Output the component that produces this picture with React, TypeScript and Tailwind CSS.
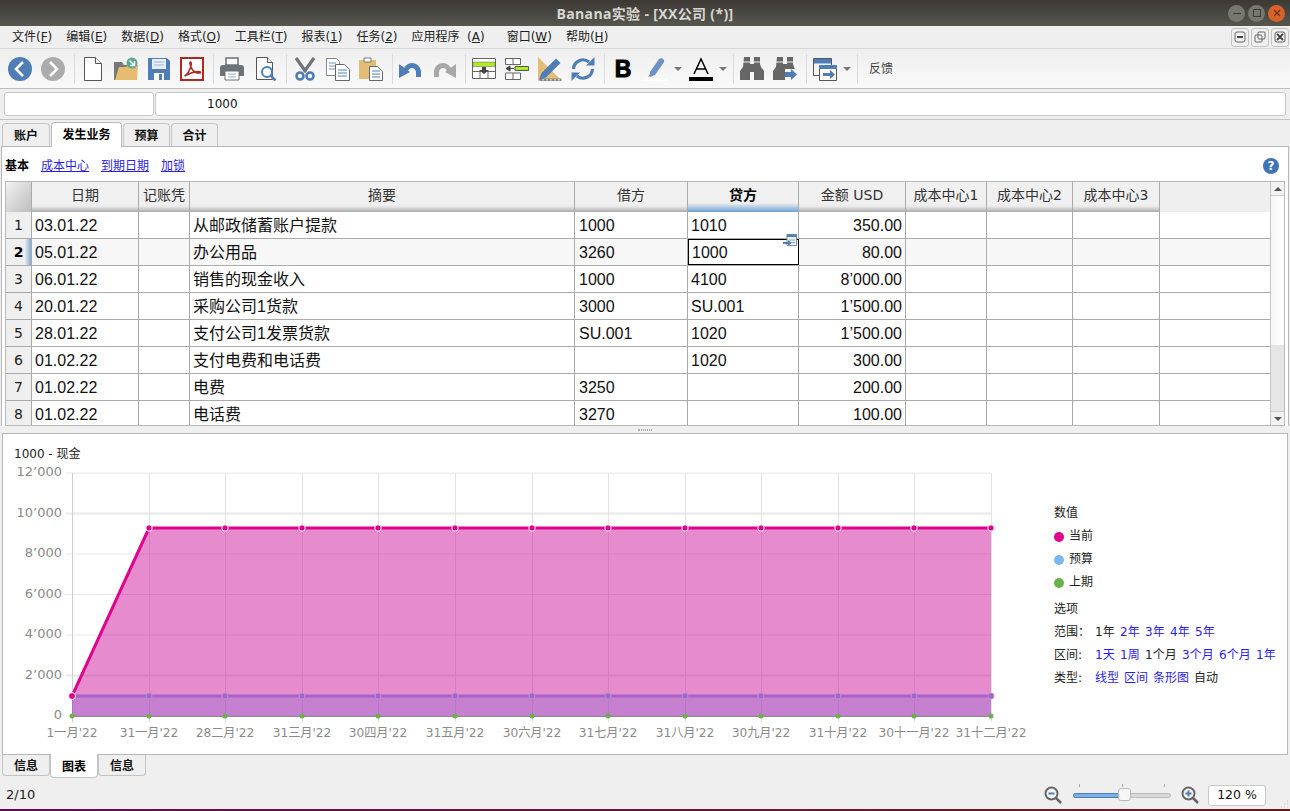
const cjk = "font-['DejaVu_Sans','Noto_Sans_CJK_SC',sans-serif]";

const menus = [
  ["文件(", "F", ")"],
  ["编辑(", "E", ")"],
  ["数据(", "D", ")"],
  ["格式(", "O", ")"],
  ["工具栏(", "T", ")"],
  ["报表(", "1", ")"],
  ["任务(", "2", ")"],
  ["应用程序  (", "A", ")"],
  ["窗口(", "W", ")"],
  ["帮助(", "H", ")"],
];

const columns = [
  { name: "日期", w: "w-[107px]" },
  { name: "记账凭", w: "w-[51px]" },
  { name: "摘要", w: "w-[385px]" },
  { name: "借方", w: "w-[113px]" },
  { name: "贷方", w: "w-[111px]" },
  { name: "金额 USD", w: "w-[107px]" },
  { name: "成本中心1", w: "w-[81px]" },
  { name: "成本中心2", w: "w-[86px]" },
  { name: "成本中心3", w: "w-[87px]" },
];

const rows = [
  ["03.01.22", "", "从邮政储蓄账户提款", "1000", "1010", "350.00"],
  ["05.01.22", "", "办公用品", "3260", "1000", "80.00"],
  ["06.01.22", "", "销售的现金收入", "1000", "4100", "8’000.00"],
  ["20.01.22", "", "采购公司1货款", "3000", "SU.001", "1’500.00"],
  ["28.01.22", "", "支付公司1发票货款", "SU.001", "1020", "1’500.00"],
  ["01.02.22", "", "支付电费和电话费", "", "1020", "300.00"],
  ["01.02.22", "", "电费", "3250", "", "200.00"],
  ["01.02.22", "", "电话费", "3270", "", "100.00"],
];

const xs = [72, 149, 225, 302, 378, 455, 532, 608, 685, 761, 838, 914, 991];
const xLabels = ["1一月'22", "31一月'22", "28二月'22", "31三月'22", "30四月'22", "31五月'22", "30六月'22", "31七月'22", "31八月'22", "30九月'22", "31十月'22", "30十一月'22", "31十二月'22"];
const yTicks = [
  ["12’000", 473],
  ["10’000", 513.5],
  ["8’000", 554],
  ["6’000", 594.5],
  ["4’000", 635],
  ["2’000", 675.5],
  ["0", 716],
] as const;

function Sep() {
  return <div className="mr-[6px] h-[30px] w-px bg-[#dcdcdc]" />;
}

function Tool({ children, className = "mr-[9px]" }: { children: React.ReactNode; className?: string }) {
  return (
    <svg viewBox="0 0 24 24" className={`h-6 w-6 shrink-0 ${className}`}>
      {children}
    </svg>
  );
}

function Caret() {
  return (
    <svg viewBox="0 0 12 12" className="mr-[4px] h-3 w-3 shrink-0">
      <path d="M2 4h8l-4 4z" fill="#777" />
    </svg>
  );
}

function Toolbar() {
  const blue = "#4f7db8";
  const grey = "#666";
  return (
    <div className="flex h-[40px] shrink-0 items-center border-b border-[#bdbdbd] bg-gradient-to-b from-[#efefef] to-[#f9f9f9] pl-2">
      <Tool>
        <circle cx="12" cy="12" r="12" fill={blue} />
        <path d="M15 5l-7 7 7 7" fill="none" stroke="#fff" strokeWidth="2.6" />
      </Tool>
      <Tool>
        <circle cx="12" cy="12" r="12" fill="#ababab" />
        <path d="M9 5l7 7-7 7" fill="none" stroke="#fff" strokeWidth="2.6" />
      </Tool>
      <Sep />
      <Tool>
        <path d="M3.500 .5h11l6 6v17h-17z" fill="#fff" stroke="#555" />
        <path d="M14.500 .5v6h6" fill="#eee" stroke="#555" />
      </Tool>
      <Tool>
        <path d="M0 23V5h8l2 3h5v15z" fill="#777" />
        <path d="M1 23l4-13h7l2-2h10l-1 15z" fill="#e6bc70" />
        <circle cx="18" cy="6" r="5.500" fill="#5aa88a" />
        <path d="M15.500 3.500l4.500 4.500M20.500 4v4.500H16" fill="none" stroke="#fff" strokeWidth="1.500" />
      </Tool>
      <Tool>
        <path d="M1 1h19l3 3v19H1z" fill={blue} />
        <path d="M5 2h14v10H5z" fill="#e8eef6" />
        <path d="M7 5h10M7 8h10" stroke="#9db5d6" strokeWidth="1.200" />
        <path d="M7 16h10v7H7z" fill="#fff" />
        <path d="M12 17h3v6h-3z" fill={blue} />
      </Tool>
      <Tool>
        <path d="M1 1h22v22H1z" fill="#fff" stroke="#ad2a24" strokeWidth="2" />
        <path
          d="M4.500 19c3-1.500 5-5 6.500-10 .5-2 .5-4-.5-4-1.200 0-.5 4 1.500 7 2 3 5 4.500 8 4 1.500-.5 0-2-3-1.500-4 .5-8 2-12.500 4.500z"
          fill="none"
          stroke="#ad2a24"
          strokeWidth="1.500"
        />
      </Tool>
      <Sep />
      <Tool>
        <path d="M6 1h12v7H6z" fill="#fff" stroke="#6b7278" strokeWidth="1.500" />
        <path d="M0 11q0-3 3-3h18q3 0 3 3v8H0z" fill="#6b7278" />
        <path d="M5 14h14v9H5z" fill="#fff" stroke="#6b7278" />
        <path d="M8 17h8M8 20h8" stroke="#8fb0d8" />
      </Tool>
      <Tool>
        <path d="M3.500 .5h11l5 5v17h-16z" fill="#fff" stroke="#555" />
        <path d="M14.500 .5v5h5" fill="#eee" stroke="#555" />
        <circle cx="14" cy="15" r="5" fill="#fff" stroke={blue} strokeWidth="2" />
        <path d="M17.500 18.500l5 5" stroke={blue} strokeWidth="2.500" />
      </Tool>
      <Sep />
      <Tool>
        <path d="M3 1l10 14M21 1L11 15" stroke="#6f7478" strokeWidth="3.200" />
        <circle cx="7" cy="19" r="3.500" fill="none" stroke={blue} strokeWidth="2.600" />
        <circle cx="17" cy="19" r="3.500" fill="none" stroke={blue} strokeWidth="2.600" />
      </Tool>
      <Tool>
        <path d="M.5 1.500h10l3 3v14H.5z" fill="#fff" stroke="#888" />
        <path d="M3 6h7M3 9h7M3 12h7" stroke="#6f93c4" />
        <path d="M9.500 7.500h9l5 5v11h-14z" fill="#fff" stroke="#666" />
        <path d="M12 13h9M12 16h9M12 19h9" stroke={blue} />
      </Tool>
      <Tool>
        <path d="M0 3h17v19H0z" fill="#e3bd75" />
        <path d="M5 1h7v4H5z" fill="#fff" stroke="#777" />
        <path d="M10.500 9.500h8l5 5v9h-13z" fill="#fff" stroke="#666" />
        <path d="M13 14h8M13 17h8M13 20h8" stroke={blue} />
      </Tool>
      <Sep />
      <Tool>
        <path d="M4 14c1-5 5-8 9-8 5 0 9 4 9 9v5h-5v-5c0-2-2-4-4-4-2 0-3 1-4 3z" fill={blue} />
        <path d="M0 7l11 8-11 6z" fill={blue} />
      </Tool>
      <Tool>
        <path d="M20 14c-1-5-5-8-9-8-5 0-9 4-9 9v5h5v-5c0-2 2-4 4-4 2 0 3 1 4 3z" fill="#a8a8a8" />
        <path d="M24 7l-11 8 11 6z" fill="#a8a8a8" />
      </Tool>
      <Sep />
      <Tool>
        <path d="M.5 1.500h23v20H.5zM.5 14.500h23M8 14.500v7M16 14.500v7" fill="#fff" stroke="#666" />
        <path d="M1 5h22v4.500H1z" fill="#aeea2a" stroke="#666" strokeWidth=".5" />
        <path d="M10 10h4v3h3l-5 4-5-4h3z" fill="#444" />
      </Tool>
      <Tool>
        <path d="M.5 1.500h15v6H.5zM8 1.500v6M.5 16h15v6.500H.5zM8 16v6.500" fill="#fff" stroke="#666" />
        <path d="M10 9.500h13.500v4H10z" fill="#aeea2a" stroke="#555" />
        <path d="M9 11.500H5V9L1 11.500 5 14v-2.500z" fill="#444" stroke="#444" />
      </Tool>
      <Tool>
        <path d="M0 0v24h24z" fill="#e3bd75" />
        <path d="M5 13v6h6z" fill="#f6f6f6" />
        <path d="M2 21.500h21.500V24H2z" fill="#8a8a8a" />
        <path d="M5 22v1.500M9 22v1.500M13 22v1.500M17 22v1.500M21 22v1.500" stroke="#fff" />
        <path d="M1 23l2.500-7L18 1.500 22.500 6 8 20.500z" fill={blue} />
      </Tool>
      <Tool>
        <path d="M2.500 12a9.500 9.500 0 0 1 15.500-7" fill="none" stroke={blue} strokeWidth="3.200" />
        <path d="M21.500 12a9.500 9.500 0 0 1-15.500 7" fill="none" stroke={blue} strokeWidth="3.200" />
        <path d="M15 8.500h8.500V0zM9 15.500H.5V24z" fill={blue} />
      </Tool>
      <Sep />
      <Tool>
        <text x="12" y="20" textAnchor="middle" fontFamily="Liberation Sans, sans-serif" fontWeight="900" fontSize="23" stroke="#000" strokeWidth="1">
          B
        </text>
      </Tool>
      <Tool className="mr-[4px]">
        <path d="M6 15L15 2c2-2 6 0 5 3L11 18l-5 2z" fill="#6c92c6" />
        <path d="M6 17l-2 3 3-1z" fill="#6c92c6" />
        <path d="M0 21h24v3H0z" fill="#fff" />
      </Tool>
      <Caret />
      <div className="mr-[1px]" />
      <Tool className="mr-[4px]">
        <path d="M5 17L12 2l7 15M7.500 12h9" fill="none" stroke="#000" strokeWidth="1.500" />
        <path d="M0 20h24v4H0z" fill="#000" />
      </Tool>
      <Caret />
      <Sep />
      <Tool>
        <path d="M4 0h6v7h4V0h6v7l1 3 3 4v9h-10v-8h-4v8H0v-9l3-4z" fill={grey} />
        <path d="M3 5h7M14 5h7" stroke="#f4f4f4" />
      </Tool>
      <Tool>
        <path d="M4 0h6v7h4V0h6v7l1 3 1 2H12v11h-2v-8H0v-1l3-4z" fill={grey} />
        <path d="M0 15h10v8H0z" fill={grey} />
        <path d="M3 5h7M14 5h7" stroke="#f4f4f4" />
        <path d="M12 15h6v-3l6 5.500-6 5.500v-3h-6z" fill={blue} />
      </Tool>
      <Sep />
      <Tool className="mr-[4px]">
        <path d="M.5 1.500h18v5H.5z" fill={blue} />
        <path d="M.5 1.500h18v17H.5z" fill="#fff" fillOpacity="0" stroke="#555" />
        <path d="M6 8h18v4H6z" fill={blue} />
        <path d="M6.500 8.500h17v15h-17z" fill="#fff" fillOpacity=".9" stroke="#555" />
        <path d="M6 8h18v4H6z" fill={blue} />
        <path d="M10 16h7v-3l5 4.500-5 4.500v-3h-7z" fill={blue} />
      </Tool>
      <Caret />
      <Sep />
      <span className="ml-[5px] text-[12px] text-[#444]">反馈</span>
    </div>
  );
}

function MdiButton({ children }: { children: React.ReactNode }) {
  return (
    <div className="flex h-[19px] w-[18px] items-center justify-center rounded-[3px] border border-[#c4c4c4] bg-[#f0f0f0]">
      <svg viewBox="0 0 12 12" className="h-3 w-3">
        {children}
      </svg>
    </div>
  );
}

function Table() {
  return (
    <div className="mx-[3px] flex h-[245px] border border-[#b8b8b8] bg-white">
      <div className="min-w-0 flex-1 overflow-hidden">
        <div className="flex h-[30px] bg-[#efefef]">
          <div className="h-[30px] w-[26px] border-r border-[#aaa] bg-gradient-to-br from-[#f2f2f2] to-[#bdbdbd]" />
          {columns.map((col) => (
            <div
              key={col.name}
              className={`flex h-[30px] items-center justify-center border-r border-[#aaa] pb-[3px] text-[14px] text-[#333] ${col.w} ${
                col.name === "贷方"
                  ? "bg-[linear-gradient(#f0f0f0_70%,#6ea0d2)] font-bold text-black"
                  : "bg-[linear-gradient(#f0f0f0_75%,#e8e8e8_82%,#aaa)]"
              }`}
            >
              {col.name}
            </div>
          ))}
        </div>
        {rows.map((row, i) => (
          <div key={i} className={`flex h-[27px] border-b border-[#aaa] ${i === 1 ? "bg-[#f7f7f7]" : ""}`}>
            <div
              className={`flex w-[26px] items-center justify-center border-r border-[#aaa] text-[14px] ${
                i === 1 ? "bg-[linear-gradient(90deg,#efefef_75%,#7eaad8)] font-bold text-black" : "bg-[#efefef] text-[#222]"
              }`}
            >
              {i + 1}
            </div>
            {columns.map((col, c) => {
              const text = row[c] ?? "";
              const selected = i === 1 && c === 4;
              return (
                <div
                  key={col.name}
                  className={`relative flex items-center overflow-visible whitespace-nowrap pt-px font-['Liberation_Sans','Noto_Sans_CJK_SC',sans-serif] text-[16px] text-[#111] ${col.w} ${
                    c === 5 ? "justify-end pr-[3px]" : c === 3 ? "pl-[4px]" : "pl-[3px]"
                  } ${selected ? "border border-black bg-white" : "border-r border-[#aaa]"}`}
                >
                  {text}
                  {selected && (
                    <svg viewBox="0 0 14 14" className="absolute -top-[6px] right-[1px] h-[14px] w-[14px]">
                      <path d="M4 .5h9.500v11H4z" fill="#eef3f9" stroke="#7a8fa8" />
                      <path d="M4 .5h9.500v2.500H4z" fill="#4f7db8" />
                      <path d="M6 6h6M8 8.500h4" stroke="#8aa6c8" />
                      <path d="M0 8h5V6l3.500 3L5 12v-2H0z" fill="#4f7db8" />
                    </svg>
                  )}
                </div>
              );
            })}
          </div>
        ))}
      </div>
      <div className="flex w-[14px] shrink-0 flex-col border-l border-[#c4c4c4] bg-white">
        <div className="flex h-[14px] items-center justify-center border-b border-[#ccc] bg-[#f2f2f2]">
          <div className="h-0 w-0 border-x-[4px] border-b-[4px] border-x-transparent border-b-[#555]" />
        </div>
        <div className="h-[149px] bg-gradient-to-r from-[#f6f6f6] to-white" />
        <div className="flex-1 bg-[#e6e6e6]" />
        <div className="flex h-[14px] items-center justify-center border-t border-[#ccc] bg-[#f2f2f2]">
          <div className="h-0 w-0 border-x-[4px] border-t-[4px] border-x-transparent border-t-[#555]" />
        </div>
      </div>
    </div>
  );
}

function Chart() {
  return (
    <svg viewBox="3 462 1037 292" className="h-[292px] w-[1037px] shrink-0">
      {yTicks.map(([, y]) => (
        <path key={y} d={`M66 ${y}H991`} stroke="#e8e8e8" strokeWidth={y === 513.5 || y === 675.5 ? 2 : 1} />
      ))}
      {xs.map((x, i) => (
        <path key={x} d={`M${x + 0.5} 473V722`} stroke={i === 0 ? "#cfcfcf" : "#e2e2e2"} />
      ))}
      <path d="M72 696L149 528H991V716H72z" fill="#c90d98" fillOpacity=".48" />
      <path d="M72 696H991V716H72z" fill="#8a6cd0" fillOpacity=".35" />
      <path d="M72 716.500H991" stroke="#8c8c8c" />
      <path d="M72 696H991" stroke="#a565c8" strokeWidth="3" />
      <path d="M72 696L149 528H991" fill="none" stroke="#e0008c" strokeWidth="3" />
      {xs.slice(1).map((x) => (
        <circle key={x} cx={x} cy={696} r="3" fill="#a565c8" stroke="#c08ad8" />
      ))}
      {xs.map((x) => (
        <circle key={x} cx={x} cy={716} r="2.500" fill="#6ab04c" />
      ))}
      {xs.slice(1).map((x) => (
        <circle key={x} cx={x} cy={528} r="3.200" fill="#e0008c" stroke="#fff" />
      ))}
      <circle cx={72} cy={696} r="3.500" fill="#e0008c" stroke="#fff" />
      {yTicks.map(([label, y]) => (
        <text
          key={label}
          x={62}
          y={y + 3}
          textAnchor="end"
          fontSize="13"
          fill="#8a8a8a"
          fontFamily="DejaVu Sans, Noto Sans CJK SC, sans-serif"
        >
          {label}
        </text>
      ))}
      {xs.map((x, i) => (
        <text
          key={x}
          x={x}
          y={737}
          textAnchor="middle"
          fontSize="12.200"
          fill="#8a8a8a"
          fontFamily="DejaVu Sans, Noto Sans CJK SC, sans-serif"
        >
          {xLabels[i]}
        </text>
      ))}
    </svg>
  );
}

function Legend() {
  const link = "text-[#2a1cf0]";
  return (
    <div className="flex flex-col pl-[14px] pt-[68px] text-[12px] leading-[23px] text-[#222]">
      <div>数值</div>
      {[
        ["当前", "bg-[#e0008c]"],
        ["预算", "bg-[#7ab8f5]"],
        ["上期", "bg-[#6ab04c]"],
      ].map(([label, color]) => (
        <div key={label} className="flex items-center gap-[5px]">
          <span className={`h-[10px] w-[10px] rounded-full ${color}`} />
          {label}
        </div>
      ))}
      <div className="mt-[4px]">选项</div>
      <div className="flex">
        <span className="w-[41px]">范围：</span>
        <span className="flex gap-[1px]">
          <span className="w-[24px]">1年</span>
          <span className={`w-[24px] ${link}`}>2年</span>
          <span className={`w-[24px] ${link}`}>3年</span>
          <span className={`w-[24px] ${link}`}>4年</span>
          <span className={`w-[24px] ${link}`}>5年</span>
        </span>
      </div>
      <div className="flex">
        <span className="w-[41px]">区间:</span>
        <span className="flex gap-[1px]">
          <span className={`w-[24px] ${link}`}>1天</span>
          <span className={`w-[24px] ${link}`}>1周</span>
          <span className="w-[36px]">1个月</span>
          <span className={`w-[36px] ${link}`}>3个月</span>
          <span className={`w-[36px] ${link}`}>6个月</span>
          <span className={`w-[24px] ${link}`}>1年</span>
        </span>
      </div>
      <div className="flex">
        <span className="w-[41px]">类型:</span>
        <span className="flex gap-[5px]">
          <span className={link}>线型</span>
          <span className={link}>区间</span>
          <span className={link}>条形图</span>
          <span>自动</span>
        </span>
      </div>
    </div>
  );
}

export default function App() {
  return (
    <div className={`flex h-[811px] w-[1290px] flex-col overflow-hidden bg-[#efefef] text-[12px] text-[#222] ${cjk}`}>
      <div className="flex h-[26px] shrink-0 items-center bg-gradient-to-b from-[#3c3935] to-[#57564f]">
        <div className="flex-1 pl-[62px] text-center font-['Open_Sans','Noto_Sans_CJK_SC',sans-serif] text-[14px] font-bold tracking-[.35px] text-[#d8d6d0]">
          Banana实验 - [XX公司 (*)]
        </div>
        <div className="flex items-center gap-[3px] pr-[5px]">
          <div className="flex h-[17px] w-[17px] items-center justify-center rounded-full bg-[#77766f]">
            <div className="h-px w-[8px] bg-[#3c3b36]" />
          </div>
          <div className="flex h-[17px] w-[17px] items-center justify-center rounded-full bg-[#77766f]">
            <div className="h-[8px] w-[8px] border border-[#3c3b36]" />
          </div>
          <div className="flex h-[17px] w-[17px] items-center justify-center rounded-full bg-[#d9622b]">
            <svg viewBox="0 0 8 8" className="h-2 w-2">
              <path d="M1 1l6 6M7 1L1 7" stroke="#6b3318" strokeWidth="1.200" />
            </svg>
          </div>
        </div>
      </div>

      <div className="flex h-[23px] shrink-0 items-center justify-between border-b border-[#d8d8d8] pl-[12px] pr-[1px]">
        <div className="flex gap-[14px] whitespace-pre">
          {menus.map(([a, b, c]) => (
            <span key={a} className={a.startsWith("窗口") ? "ml-[8px]" : ""}>
              {a}
              <span className="underline">{b}</span>
              {c}
            </span>
          ))}
        </div>
        <div className="flex gap-[2px]">
          <MdiButton>
            <rect x="1" y="1" width="10" height="10" rx="2" fill="none" stroke="#666" />
            <path d="M3 6h6" stroke="#444" strokeWidth="2" />
          </MdiButton>
          <MdiButton>
            <rect x="1" y="4" width="7" height="7" rx="1" fill="none" stroke="#666" />
            <rect x="4" y="1" width="7" height="7" rx="1" fill="none" stroke="#666" />
          </MdiButton>
          <MdiButton>
            <rect x="1" y="1" width="10" height="10" rx="2" fill="none" stroke="#666" />
            <path d="M3 3l6 6M9 3L3 9" stroke="#444" strokeWidth="1.800" />
          </MdiButton>
        </div>
      </div>

      <Toolbar />

      <div className="flex h-[31px] shrink-0 items-center gap-[1px] border-b border-[#c4c4c4] pl-[4px] pr-[4px]">
        <div className="h-[24px] w-[150px] rounded-[3px] border border-[#c8c8c8] bg-white" />
        <div className="h-[24px] flex-1 rounded-[3px] border border-[#c8c8c8] bg-white pl-[51px] text-[12px] leading-[22px] text-[#111]">
          1000
        </div>
      </div>

      <div className="flex h-[26px] shrink-0 items-end gap-px pl-[2px]">
        {["账户", "发生业务", "预算", "合计"].map((tab) => (
          <div
            key={tab}
            className={
              tab === "发生业务"
                ? "relative z-10 -mb-px flex h-[25px] w-[71px] items-center justify-center rounded-t-[4px] border border-b-0 border-[#bbb] bg-white font-bold text-black"
                : `flex h-[23px] items-center justify-center rounded-t-[4px] border border-b-0 border-[#c4c4c4] bg-[#efefef] pt-px font-bold text-[#111] ${
                    tab === "账户" ? "w-[48px]" : "w-[47px]"
                  }`
            }
          >
            {tab}
          </div>
        ))}
      </div>

      <div className="mx-[1px] h-[280px] shrink-0 border border-b-0 border-[#b8b8b8] bg-white">
        <div className="flex h-[34px] items-center gap-[12px] pl-[3px] pr-[9px] pt-[3px]">
          <span className="w-[24px] font-bold text-black">基本</span>
          <span className="text-[#2a1cf0] underline">成本中心</span>
          <span className="text-[#2a1cf0] underline">到期日期</span>
          <span className="text-[#2a1cf0] underline">加锁</span>
          <span className="ml-auto flex h-4 w-4 items-center justify-center rounded-full bg-[#3f74b8] text-[12px] font-bold text-white">
            ?
          </span>
        </div>
        <Table />
      </div>

      <div className="flex h-[7px] shrink-0 items-center justify-center">
        <div className="h-[2px] w-[14px] border-y border-dotted border-[#aaa]" />
      </div>

      <div className="mx-[2px] flex h-[322px] shrink-0 flex-col border border-[#b8b8b8] bg-white">
        <div className="h-[28px] pl-[11px] pt-[12px] text-[12px] leading-[16px] text-[#222]">1000 - 现金</div>
        <div className="flex">
          <Chart />
          <div className="-mt-[28px]">
            <Legend />
          </div>
        </div>
      </div>

      <div className="flex h-[23px] shrink-0 items-start pl-[2px]">
        {["信息", "图表", "信息"].map((tab, i) =>
          i === 1 ? (
            <div
              key={i}
              className="relative z-10 -mt-px flex h-[24px] w-[48px] items-center justify-center rounded-b-[4px] border border-t-0 border-[#c4c4c4] bg-white pt-[2px] font-bold text-black"
            >
              {tab}
            </div>
          ) : (
            <div
              key={i}
              className="flex h-[21px] w-[48px] items-center justify-center rounded-b-[4px] border border-t-0 border-[#c4c4c4] bg-[#efefef] pt-[1px] font-bold text-[#111]"
            >
              {tab}
            </div>
          ),
        )}
      </div>

      <div className="relative flex h-[31px] shrink-0 items-center justify-between pl-[6px] pr-[24px] pt-[3px]">
        <span className="text-[13px] text-[#222]">2/10</span>
        <div className="flex items-center">
          <svg viewBox="0 0 18 18" className="mr-[11px] h-[18px] w-[18px]">
            <circle cx="7.500" cy="7.500" r="6" fill="#f4f4f4" stroke="#666" strokeWidth="2" />
            <path d="M4.500 7.500h6" stroke="#4f7db8" strokeWidth="2" />
            <path d="M12 12l5 5" stroke="#666" strokeWidth="2.500" />
          </svg>
          <div className="relative h-[10px] w-[98px]">
            <div className="absolute left-[6px] top-[-6px] h-[3px] w-px bg-[#aaa]" />
            <div className="absolute left-[49px] top-[-6px] h-[3px] w-px bg-[#aaa]" />
            <div className="absolute left-[91px] top-[-6px] h-[3px] w-px bg-[#aaa]" />
            <div className="absolute left-0 right-0 top-[3px] h-[5px] rounded-full border border-[#bbb] bg-[#d8d8d8]" />
            <div className="absolute left-0 top-[3px] h-[5px] w-[50px] rounded-full border border-[#4f7db8] bg-[#7ab0e8]" />
            <div className="absolute left-[45px] top-[-2px] h-[13px] w-[13px] rounded-[3px] border border-[#bbb] bg-[#f6f6f6]" />
          </div>
          <svg viewBox="0 0 18 18" className="ml-[10px] mr-[9px] h-[18px] w-[18px]">
            <circle cx="7.500" cy="7.500" r="6" fill="#f4f4f4" stroke="#666" strokeWidth="2" />
            <path d="M4.500 7.500h6M7.500 4.500v6" stroke="#4f7db8" strokeWidth="2" />
            <path d="M12 12l5 5" stroke="#666" strokeWidth="2.500" />
          </svg>
          <div className="flex h-[21px] w-[58px] items-center justify-center rounded-[3px] border border-[#c8c8c8] bg-white text-[12.500px] text-[#111]">
            120 %
          </div>
        </div>
        <svg viewBox="0 0 10 10" className="absolute bottom-0 right-[1px] h-[10px] w-[10px]">
          <path d="M8 2h1M5 5h1M8 5h1M2 8h1M5 8h1M8 8h1" stroke="#c4c4c4" />
        </svg>
      </div>

      <div className="h-[2px] shrink-0 bg-gradient-to-r from-[#5c0f50] to-[#6b1a1a]" />
    </div>
  );
}
